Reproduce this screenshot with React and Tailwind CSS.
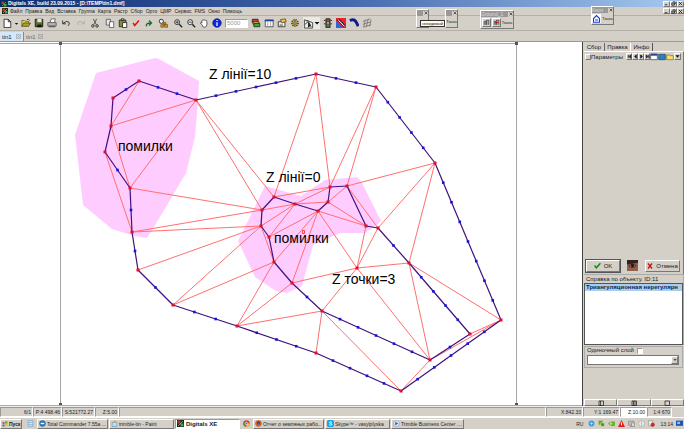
import React from "react";

const V = {
  A: [139, 81], B: [113, 98], C: [111, 126], D: [105, 152], E: [130, 188], F: [132, 232],
  G: [138, 270], H: [173, 305], I: [237, 326], J: [316, 353], K: [401, 391], L: [501, 320],
  M: [435, 163], N: [376, 87], O: [316, 74], P: [196, 100],
  a: [274, 197], b: [262, 210], c: [261, 226], d: [269, 237], e: [274, 262], f: [292, 283],
  g: [322, 311], h: [430, 360], i: [470, 334], j: [409, 263], k: [378, 228], l: [366, 226],
  m: [347, 186], n: [330, 187], o: [328, 202], p: [318, 211], q: [295, 204], r: [357, 268],
};

/* Breaklines: start vertex, end vertex, number of points in between. */
const LINES = [
  ["A", "B", 1], ["B", "C", 0], ["C", "D", 0], ["D", "E", 1], ["E", "F", 1], ["F", "G", 1],
  ["G", "H", 1], ["H", "I", 2], ["I", "J", 3], ["J", "K", 4], ["K", "L", 5], ["L", "M", 7],
  ["M", "N", 4], ["N", "O", 2], ["O", "P", 5], ["P", "A", 2],
  ["a", "b", 0], ["b", "c", 0], ["c", "d", 0], ["d", "e", 0], ["e", "f", 0], ["f", "g", 1],
  ["g", "h", 5], ["h", "i", 1], ["i", "j", 4], ["j", "k", 1], ["k", "l", 0], ["l", "m", 0],
  ["m", "n", 0], ["n", "o", 0], ["o", "p", 0], ["p", "q", 0], ["q", "a", 0],
];

const EDGES = (
  "AC CP CE DF PE Eb Fb Fc Gc Hc He Ie If Ig Jg Pa Pb Oa On Nn Nm Mm Mk Mj Lj Lh Li " +
  "jh rj rk rl rp rf rg rh Kh Kg an bq qn qo cq dq dp ep fp pl ol om mk ce"
).split(" ");

function TinMap() {
  const dots = LINES.flatMap(([s, t, n]) =>
    Array.from({ length: n }, (_, x) => {
      const u = (x + 1) / (n + 1);
      return [V[s][0] + (V[t][0] - V[s][0]) * u, V[s][1] + (V[t][1] - V[s][1]) * u];
    })
  );
  return (
    <svg width="582" height="363" viewBox="0 42 582 363" className="block" role="img" aria-label="TIN">
      <g fill="#ffccff">
        <path d="M96 73L155 58L159 59L199 81L197 113L195 137L186 173L160 217L147 238L135 236L112 229L83 205L75 135Z" />
        <path d="M265 186L301 196L325 180L357 177L361 181L381 221L378 224L365 233L340 233L313 245L302 286L287 293L276 291L255 277L238 241L245 227Z" />
      </g>
      <path d="M0 43.500H517M60.500 43V405M516.500 43V405" stroke="#a6a6a6" fill="none" />
      <path d="M59 42h3v3h-3zM515 42h3v3h-3zM59 403h3v2h-3zM515 403h3v2h-3z" fill="#555" />
      <g stroke="#ff7070" strokeWidth="1">
        {EDGES.map((x) => (
          <line key={x} x1={V[x[0]][0]} y1={V[x[0]][1]} x2={V[x[1]][0]} y2={V[x[1]][1]} />
        ))}
      </g>
      <g stroke="#40107e" strokeWidth="1.200">
        {LINES.map(([s, t]) => (
          <line key={s + t} x1={V[s][0]} y1={V[s][1]} x2={V[t][0]} y2={V[t][1]} />
        ))}
      </g>
      <g fill="#1414dc">
        {dots.map(([x, y]) => (
          <rect key={x + "," + y} x={x - 1.3} y={y - 1.3} width="2.600" height="2.600" />
        ))}
      </g>
      <g fill="#e0102c">
        {Object.entries(V).map(([k, [x, y]]) => (
          <rect key={k} x={x - 1.5} y={y - 1.5} width="3" height="3" />
        ))}
      </g>
      <path d="M302.500 230.500h2v3h-2z" stroke="#ff4040" fill="none" />
      <g className="text-[14px]" fill="#000">
        <text x="209" y="79">Z лінії=10</text>
        <text x="118" y="151">помилки</text>
        <text x="266" y="182">Z лінії=0</text>
        <text x="274" y="243">помилки</text>
        <text x="332" y="284">Z точки=3</text>
      </g>
    </svg>
  );
}

function Ico({ children, s = 12 }) {
  return (
    <svg width={s} height={s} viewBox="0 0 12 12" fill="none" stroke="#222" className="block shrink-0" aria-hidden="true">
      {children}
    </svg>
  );
}

const AppLogo = ({ s = 6 }) => (
  <Ico s={s}>
    <path d="M0 0h12v12H0z" fill="#16301c" stroke="none" />
    <path d="M1 1h5v5H1z" fill="#b23a2c" stroke="none" />
    <path d="M6 6h5v5H6z" fill="#49a04c" stroke="none" />
    <path d="M2 10L10 2" stroke="#ddd" />
  </Ico>
);

const Glass = ({ children }) => (
  <>
    <circle cx="5" cy="5" r="3" fill="#f2f6f6" />
    <path d="M7.500 7.500L11 11" strokeWidth="1.600" />
    {children}
  </>
);

const TOOLS = [
  ["Новый", "w-[13px]", <path d="M2.500 1.500h5l3 3v7h-8zM7.500 1.500v3h3" fill="#fff" />],
  ["Список", "w-1.5", <path d="M3 5h6l-3 3z" fill="#111" stroke="none" />],
  ["Открыть", "w-[13px]", <><path d="M1 10V3h3l1 1h4v2" fill="#dcd65c" stroke="#6f6a12" /><path d="M1 10l2-4h8.500L9 10z" fill="#a9a12a" stroke="#55500a" /><path d="M7 2q2-1.500 3.500 1" /></>],
  ["Сохранить", "w-[13px]", <><path d="M1.500 1.500h9v9h-9z" fill="#5c7030" stroke="#111" /><path d="M4 1h5v4H4z" fill="#e4e4e4" stroke="none" /><path d="M4 8h5v3H4z" fill="#111" stroke="none" /></>],
  ["Печать", "w-[13px]", <><path d="M4 5l1-4h5L9 5" fill="#fff" stroke="#555" /><path d="M1 5.500h10v4H1z" fill="#b4b4b0" stroke="#555" /><path d="M2 10.500h8" stroke="#333" /></>],
  ["Отменить", "w-4", <path d="M2 3v4h4M2.500 6.500q4-4 7-1.500q1.500 2-1 4.500" />],
  ["Повторить", "w-[13px]", <path d="M10 3v4H6M9.500 6.500q-4-4-7-1.500q-1.500 2 1 4" stroke="#aaa" />],
  ["Вырезать", "w-4", <><path d="M4 1l3.500 7M8 1L4.500 8" stroke="#444" /><circle cx="3.500" cy="9.500" r="1.500" /><circle cx="8.500" cy="9.500" r="1.500" /></>],
  ["Копировать", "w-[13px]", <><path d="M1.500 1.500h5v7h-5z" fill="#e8e8e8" stroke="#555" /><path d="M5.500 4.500h5v7h-5z" fill="#fff" stroke="#555" /></>],
  ["Вставить", "w-[13px]", <><path d="M1.500 2.500h8v8h-8z" fill="#8c8c2c" /><path d="M4 1h3v2H4z" fill="#ddd" /><path d="M5.500 5.500h5v6h-5z" fill="#fff" /></>],
  ["Применить", "w-[13px]", <path d="M2.500 6l2 3l5-6" stroke="#e01010" strokeWidth="1.800" />],
  ["Продолжить", "w-[13px]", <path d="M3 10q-1-4 5-4M6 3l3 3l-3 3" stroke="#1c6a2c" strokeWidth="1.600" />],
  ["Показать всё", "w-4", <><circle cx="4" cy="4" r="2.500" fill="#eee" /><path d="M6 6l2 2" /><path d="M6.500 5.500h3v2h-3zM8 8h3.500v3H8zM3.500 8h3v3h-3z" fill="#e6a020" stroke="#7c5210" /></>],
  ["Увеличить", "w-[13px]", <Glass><path d="M3 5h4M5 3v4" /></Glass>],
  ["Уменьшить", "w-[13px]", <Glass><path d="M3 5h4" /></Glass>],
  ["Рука", "w-[13px]", <path d="M3.500 8L1.500 6q1-1.500 2 0V3q1-1 1.500 0q.5-2 1.500-.5q1-1 1.500.5q1.500-.5 1.500 1.500v3q0 3-2.500 3.500H5z" fill="#fff" stroke="#444" />],
  ["Информация", "w-[13px]", <><circle cx="6" cy="6" r="5" fill="#1226e0" stroke="#0a1690" /><path d="M6 5v4.500M6 2.500v1.200" stroke="#fff" strokeWidth="1.500" /></>],
];

const TOOLS2 = [
  ["Слои", <><path d="M1.500 1.500h7v4h-7z" fill="#e03030" /><path d="M2.500 4.500h7v3h-7z" fill="#f0e850" /><path d="M3.500 6.500h7v4h-7z" fill="#38a838" /></>],
  ["Таблица", <><path d="M1.500 2.500h9.500v8H1.500z" fill="#fff" stroke="#444" /><path d="M1 2h10.500v2H1z" fill="#2b3e9e" stroke="none" /><path d="M4.500 4v6M8 4v6" stroke="#999" /></>],
  ["Свойства", <><path d="M1.500 4.500h8v6h-8z" fill="#fff" /><path d="M4 2l6-1l1 3l-5 2z" fill="#f0c050" stroke="#705010" /><path d="M3 7.500h4M3 9h4" stroke="#777" /></>],
  ["Настройка", <><circle cx="6" cy="6" r="3.700" fill="#d8c848" stroke="#444420" strokeWidth="2" strokeDasharray="1.500 1" /><circle cx="6" cy="6" r="1.500" fill="#fff" /></>],
];

const TOOLS3 = [
  ["Светофор", <><path d="M3.500 1h5v10.500h-5zM1 3h2M9 3h2M1 7h2M9 7h2" fill="#555" /><path d="M5 2h2v2H5z" fill="#d33" stroke="none" /><path d="M5 5h2v2H5z" fill="#dd4" stroke="none" /><path d="M5 8h2v2H5z" fill="#3b3" stroke="none" /></>],
  ["Растр", <><path d="M0 0h12v12H0z" fill="#e8242c" stroke="none" /><path d="M0 3L9 12H0z" fill="#2868d8" stroke="none" /><path d="M1 2l9 9M4 1l7 8" stroke="#102060" /><path d="M3 3l7 7" stroke="#fff" /></>],
  ["Кривая", <path d="M1 3q5-2 7 1t3 6" stroke="#101c8c" strokeWidth="3.500" />],
  ["Сетка", <path d="M1 4l9-3M1 7.500l10-3M2 11l9-3M4 2L2 11M7.500 1L5 11M11 2L9 10" stroke="#777" />],
];

const MENU = ["Файл", "Правка", "Вид", "Вставка", "Группа", "Карта", "Растр", "Сбор", "Орто", "ЦМР", "Сервис", "FMS", "Окно", "Помощь"];

const raised = "border border-t-white border-l-white border-r-[#777] border-b-[#777] bg-[#d4d0c8] ";
const sunken = "border border-t-[#999] border-l-[#999] border-r-white border-b-white ";

function WinButtons() {
  return (
    <div className="flex shrink-0">
      {[["Свернуть", "M2 9h6"], ["Восстановить", "M4 2h6v5H8M2 5h6v5H2z"], ["Закрыть", "M2 2l8 8M10 2l-8 8"]].map(([n, d]) => (
        <button key={n} aria-label={n} className={raised + "flex h-[6px] w-[7px] items-center justify-center"}>
          <Ico s={5}><path d={d} strokeWidth="2" /></Ico>
        </button>
      ))}
    </div>
  );
}

function Palette({ title, place, children }) {
  return (
    <div className={raised + "absolute flex flex-col " + place}>
      <div className="flex h-[6px] items-center justify-between bg-[#989898] text-[5px] leading-[6px] text-[#ddd]">
        <span>{title}</span>
        <button aria-label="Закрыть" className="flex size-[5px] shrink-0 items-center justify-center bg-[#d4d0c8]">
          <Ico s={4}><path d="M2 2l8 8M10 2l-8 8" strokeWidth="2" /></Ico>
        </button>
      </div>
      <div className="flex flex-1 items-center justify-center gap-px text-[4px] leading-[6px]">{children}</div>
    </div>
  );
}

const TASKS = [
  ["Total Commander 7.55a ...", <><circle cx="6" cy="6" r="5" fill="#3484cc" stroke="#1c5a96" /><path d="M3 6h6" stroke="#fff" strokeWidth="2" /></>],
  ["trimble-tin - Paint", <><path d="M2 4h8v7H2z" fill="#bfe0f2" stroke="#5a90b4" /><path d="M4 5l4-4" stroke="#e4a020" strokeWidth="2" /></>],
];
const TASKS2 = [
  ["Отчет о земляных рабо...", <><circle cx="6" cy="6" r="5" fill="#e86a1c" stroke="#c84410" /><circle cx="6" cy="5" r="3" fill="#2c50a8" stroke="none" /></>],
  ["Skype™ - vasylplyska", <><rect x="0" y="0" width="12" height="12" rx="3" fill="#18a4e4" stroke="none" /><path d="M8.500 4q-2-2-4.500 0q0 1.500 2.500 2t2 2q-2 2-5 0" stroke="#fff" strokeWidth="1.600" /></>],
  ["Trimble Business Center ....", <><circle cx="6" cy="6" r="5" fill="#e4ecf6" stroke="#7890b0" /><path d="M4 3l5 3l-5 3z" fill="#2858b0" stroke="none" /></>],
];

function Task({ label, children }) {
  return (
    <button className={raised + "flex h-2.5 min-w-[65px] shrink-0 items-center gap-px px-px text-[5px]"}>
      <Ico s={7}>{children}</Ico>{label}
    </button>
  );
}

const TRAY = [
  <><circle cx="6" cy="6" r="5" fill="#3c94d8" stroke="#8abbe0" /><path d="M3 6h6M6 3v6" stroke="#d8ecfa" /></>,
  <><path d="M1 1h7v7H1z" fill="#68ac1c" stroke="none" /><path d="M5 5h6v6H5z" fill="#4c8c10" stroke="#dfe8cf" /></>,
  <><path d="M0 6q5-6 12-3v7q-8 2-12-4z" fill="#6cb41c" stroke="none" /><circle cx="5" cy="6" r="1.500" stroke="#fff" /></>,
  <><path d="M6 0l6 12H0z" fill="#e02020" stroke="none" /><path d="M6 4v5" stroke="#fff" strokeWidth="1.500" /></>,
  <><path d="M1 2h9v7H1zM3 11h6" fill="#c0c0c0" stroke="#777" /><path d="M6 5h5v6H6z" fill="#ddd" stroke="#777" /></>,
  <><circle cx="6" cy="6" r="5" fill="#eee" stroke="#999" /><path d="M6 3v6" stroke="#888" /></>,
  <><path d="M1 1h7v9H1z" fill="#eee" stroke="#888" /><circle cx="8" cy="8" r="3" fill="#e02828" stroke="#b01010" /></>,
];

const cell = "flex h-[10px] items-center justify-end px-px text-[5px] " + sunken;

export default function App() {
  return (
    <div className="min-h-screen bg-white pr-1.5 font-['Liberation_Sans',Arial,sans-serif] text-[6px] leading-[8px] whitespace-nowrap text-[#222]">
      <div className="relative flex flex-col bg-[#d4d0c8]">
        <header className="flex h-[7px] items-center gap-px bg-linear-to-r from-[#0c2c72] via-[#4468ac] to-[#a6caf0] pl-px">
          <AppLogo s={6} />
          <h1 className="flex-1 text-[5px] leading-[7px] font-bold text-white">Digitals XE, build 23.09.2015 - [D:\TEMP\tin1.dmf]</h1>
          <WinButtons />
        </header>
        <nav className="flex h-[9px] items-center border-b border-[#b4b0a8] pl-0.5">
          <AppLogo s={6} />
          <div className="flex flex-1 gap-[3px] pl-0.5">
            {MENU.map((m) => <button key={m} className="text-[5px]">{m}</button>)}
          </div>
          <WinButtons />
        </nav>

        <div className="flex h-[15px] items-center border-b border-[#b4b0a8]">
          {TOOLS.map(([n, w, d]) => (
            <button key={n} aria-label={n} className={"flex shrink-0 justify-center " + w}><Ico s={n === "Список" ? 7 : 10}>{d}</Ico></button>
          ))}
          <input aria-label="Масштаб" defaultValue="5000" className={sunken + "ml-0.5 h-[9px] w-[23px] bg-white px-px text-[6px] text-[#999]"} />
          <div className="flex gap-[3px] pl-[3px]">
            {TOOLS2.map(([n, d]) => <button key={n} aria-label={n}><Ico s={10}>{d}</Ico></button>)}
          </div>
          <button aria-label="Выбор" className="ml-[3px] flex h-3 w-[17px] items-center bg-[#ebe9e4]">
            <Ico s={11}><path d="M1.500 2v9h9V5zM3 3h3M2 7l4-3l3 6" stroke="#444" /><path d="M6 5v5l2-2z" fill="#111" /></Ico>
            <Ico s={6}><path d="M1 4h10l-5 5z" fill="#111" stroke="none" /></Ico>
          </button>
          <div className="flex gap-[3px] pl-[3px]">
            {TOOLS3.map(([n, d]) => <button key={n} aria-label={n}><Ico s={10}>{d}</Ico></button>)}
          </div>
        </div>

        <div className="flex h-[11px] items-end border-b border-[#999]" role="tablist">
          <button role="tab" aria-selected="true" className="flex h-[9px] w-[23px] items-center justify-between bg-[#d5e6f7] px-0.5">
            tin1<Ico s={5}><path d="M1 1h10v10H1zM3 3l6 6M9 3l-6 6" stroke="#777" /></Ico>
          </button>
          <button role="tab" aria-selected="false" className="flex h-[9px] w-[22px] items-center justify-between border-l border-[#888] px-0.5 text-[#666]">
            tin1<Ico s={5}><path d="M1 1h10v10H1zM3 3l6 6M9 3l-6 6" stroke="#777" /></Ico>
          </button>
        </div>

        <div className="flex">
          <main className="min-w-0 flex-1 overflow-hidden border-b border-[#aaa] bg-white"><TinMap /></main>
          <aside className="flex w-[102px] shrink-0 flex-col border-l border-[#444] pl-px">
            <div className="flex h-[9px] items-end" role="tablist">
              <button role="tab" aria-selected="false" className="w-[21px] border-r border-[#666]">Сбор</button>
              <button role="tab" aria-selected="false" className="w-[25px]">Правка</button>
              <button role="tab" aria-selected="true" className="w-[23px] border-r border-l border-r-[#555] border-l-white">Инфо</button>
            </div>
            <div className="flex h-[206px] items-start border-t border-r border-t-white border-r-[#777] pt-px pr-0.5">
              <label className="flex items-center pl-px">
                <input type="checkbox" className={raised + "size-[6px] appearance-none"} />Параметры
              </label>
              <div className="ml-auto flex">
                {["M3 2v8M9 2L5 6l4 4z", "M8 2L4 6l4 4z", "M4 2l4 4l-4 4z", "M9 2v8M3 2l4 4l-4 4z"].map((d) => (
                  <button key={d} aria-label="Переход" className={raised + "flex h-[7px] w-[6px] items-center justify-center"}><Ico s={5}><path d={d} fill="#111" strokeWidth="2" /></Ico></button>
                ))}
                <button aria-label="Таблица"><Ico s={8}><path d="M1 2h10v8H1z" fill="#fff" stroke="#333" /><path d="M1 1h10v3H1z" fill="#2b3e9e" stroke="none" /></Ico></button>
                <button aria-label="Экран"><Ico s={8}><path d="M1 2h10v8H1z" fill="#2a80c0" stroke="#123c70" /></Ico></button>
                <button aria-label="Папка"><Ico s={8}><path d="M1 3h4l1 1h5v6H1z" fill="#f6e070" stroke="#806010" /></Ico></button>
                <button aria-label="Ещё" className={raised + "flex h-[7px] w-[7px] items-center justify-center"}><Ico s={5}><path d="M1 3h10L6 9z" fill="#111" stroke="none" /></Ico></button>
              </div>
            </div>
            <div className="flex h-[17px] items-center justify-between border-r border-[#777] pr-[3px] pl-0.5">
              <button className={raised + "flex h-3 w-[34px] items-center justify-center gap-[3px] outline outline-[#555]"}>
                <Ico s={7}><path d="M1 6l3 4l7-8" stroke="#128a12" strokeWidth="2.500" /></Ico>OK
              </button>
              <button aria-label="Просмотр"><Ico s={11}><path d="M0 0h12v12H0z" fill="#94604c" stroke="none" /><path d="M0 0h12v3L0 5z" fill="#36201c" stroke="none" /><path d="M2 6q4-3 8 0q-4 4-8 0z" fill="#e8d4c8" stroke="#2c1814" /><circle cx="6" cy="6" r="1.500" fill="#111" /></Ico></button>
              <button className={raised + "flex h-3 w-[35px] items-center justify-center gap-[3px]"}>
                <Ico s={6}><path d="M2 1l8 10M10 1L2 11" stroke="#c01010" strokeWidth="2.500" /></Ico>Отмена
              </button>
            </div>
            <section className="flex flex-col border-t border-r border-[#aaa] pt-px">
              <h2 className="pl-0.5 leading-[7px]">Справка по объекту. ID:11</h2>
              <div className="h-[62px] border border-[#555] bg-white">
                <p className="h-[7px] bg-[#a8cdf2] pl-px leading-[7px] font-bold text-[#16283c]">Триангуляционная нерегулярн</p>
              </div>
            </section>
            <fieldset className="mt-px mr-px h-[22px] border border-[#aaa] pr-[3px] pl-0.5">
              <label className="flex h-[7px] items-center gap-[3px] leading-[7px]">
                Одиночный слой<input type="checkbox" className={sunken + "size-[6px] appearance-none bg-white"} />
              </label>
              <div className="relative">
                <select aria-label="Слой" className="mt-px block h-[10px] w-full appearance-none border border-[#777] bg-white"><option></option></select>
                <span className={raised + "pointer-events-none absolute top-px right-px flex h-2 w-[7px] items-center justify-center"}><Ico s={4}><path d="M1 3h10L6 9z" fill="#444" stroke="none" /></Ico></span>
              </div>
            </fieldset>
            <div className="mt-auto flex h-[7px]">
              {["M2 2h9v9H2zM5 2v9", "M2 2h9v9H2zM5 2v9M8 2v9", "M2 2h9v9H2z"].map((d) => (
                <button key={d} aria-label="Вид панели" className={raised + "flex flex-1 items-center justify-center"}><Ico s={6}><path d={d} strokeWidth="1.500" /></Ico></button>
              ))}
            </div>
          </aside>
        </div>

        <footer className="flex h-[11px] items-center border-t border-[#eee]">
          <div className={cell + "w-[33px]"}>6/1</div>
          <div className={cell + "w-[29px]"}>P:4 498.46</div>
          <div className={cell + "w-[33px]"}>S:521772.27</div>
          <div className={cell + "w-6"}>Z:5.00</div>
          <div className={cell + "flex-1"} />
          <div className={cell + "w-[37px]"}>X:842.33</div>
          <div className={cell + "w-[37px]"}>Y:1 169.47</div>
          <div className={cell + "w-[27px] bg-white"}>Z:10.00</div>
          <div className={cell + "w-[25px]"}>1:4 670</div>
          <div className="w-3" />
        </footer>
        <div className="flex h-3 items-center gap-px border-t border-white">
          <button className={raised + "flex h-2.5 w-[22px] items-center gap-px px-px text-[5px] font-bold"}>
            <Ico s={6}><path d="M1 2h4v4H1z" fill="#e84c20" stroke="none" /><path d="M6 1h5v4H6z" fill="#58a828" stroke="none" /><path d="M1 7h4v4H1z" fill="#2c70d0" stroke="none" /><path d="M6 6h5v4H6z" fill="#f0b818" stroke="none" /></Ico>Пуск
          </button>
          <button aria-label="Блокнот" className="mr-0.5 ml-1"><Ico s={7}><path d="M2 1h8v10H2z" fill="#cfe6f8" stroke="#6c9cc4" /><path d="M2 4h8M2 8h8" stroke="#6c9cc4" /></Ico></button>
          {TASKS.map(([t, d]) => <Task key={t} label={t}>{d}</Task>)}
          <button className={sunken + "flex h-2.5 w-[65px] items-center gap-0.5 bg-white px-px text-[6px] font-bold"}><AppLogo s={7} />Digitals XE</button>
          <button aria-label="Chrome" className="mx-0.5"><Ico s={7}><circle cx="6" cy="6" r="5.500" fill="#e23c2c" stroke="none" /><path d="M6 6L1 4a5.500 5.500 0 0 0 4 7.400z" fill="#2c9c48" stroke="none" /><path d="M6 6h5.500a5.500 5.500 0 0 1-6 5.500z" fill="#f4c820" stroke="none" /><circle cx="6" cy="6" r="2.200" fill="#3c7ce0" stroke="#fff" /></Ico></button>
          {TASKS2.map(([t, d]) => <Task key={t} label={t}>{d}</Task>)}
          <div className="ml-auto flex items-center gap-[3px] pr-px">
            <span className="pr-0.5 text-[5px]">RU</span>
            {TRAY.map((d, x) => <Ico key={x} s={7}>{d}</Ico>)}
            <time className="pl-0.5 text-[5px]">13:14</time>
            <Ico s={7}><path d="M0 1h12v9H0z" fill="#1c54b4" stroke="none" /><path d="M2 3h5v4H2z" fill="#8cc0f4" stroke="none" /></Ico>
          </div>
        </div>

        <Palette title="" place="top-[9px] right-[255px] h-[19px] w-[13px]" />
        <Palette title="" place="top-[9px] right-[226px] h-[19px] w-[13px]"><span>Точка</span></Palette>
        <div role="tooltip" className="absolute top-5 right-[239px] h-[7px] w-[25px] border border-[#333] bg-[#fffbe8] text-center text-[4px] leading-[5px]">невидимый</div>
        <Palette title="Ground_1" place="top-[10px] right-[170px] h-[19px] w-[34px]">
          <button aria-label="Модель" className={raised}><Ico s={7}><path d="M2 10V4h3v6M6 10V2h4v8" fill="#aaa" /></Ico></button>
          <button aria-label="Удалить модель" className={raised}><Ico s={7}><path d="M2 10V4h3v6M6 10V2h4v8" fill="#aaa" /><path d="M4 6h5" stroke="#e01010" strokeWidth="2" /></Ico></button>
          <button>Точка</button>
        </Palette>
        <Palette title="Кноп" place="top-[6px] right-[70px] h-[19px] w-[23px]">
          <button aria-label="Дом" className="bg-white"><Ico s={9}><path d="M2 11V6l4-4l4 4v5zM4 8h4" stroke="#1838e0" strokeWidth="1.500" /></Ico></button>
          <button>Точка</button>
        </Palette>
      </div>
    </div>
  );
}
